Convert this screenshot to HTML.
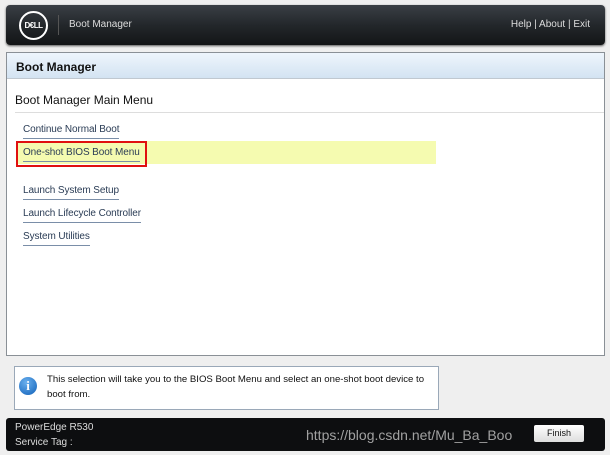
<!DOCTYPE html>
<html><head><style>
body{margin:0;width:610px;height:455px;background:#efefef;font-family:"Liberation Sans",sans-serif;position:relative;overflow:hidden}
.hdr{position:absolute;left:6px;top:5px;width:599px;height:40px;border-radius:4px;background:linear-gradient(#3a3f45,#23272b 50%,#131517);box-shadow:0 1px 2px #555}
.logo{position:absolute;left:13px;top:6px;width:25px;height:25px;border:2px solid #fff;border-radius:50%;color:#fff;font-size:8px;font-weight:bold;text-align:center;line-height:25px;letter-spacing:-0.5px}
.sep{position:absolute;left:52px;top:10px;width:1px;height:20px;background:#555}
.ht{position:absolute;left:63px;top:14px;color:#ddd;font-size:10px}
.hr{position:absolute;right:15px;top:14px;color:#ddd;font-size:10px}
.main{position:absolute;left:6px;top:52px;width:597px;height:302px;background:#fff;border:1px solid #8a9096}
.tb{height:25px;background:linear-gradient(#eef5fc,#d3e3f2);border-bottom:1px solid #c0c8d0;font-size:12px;font-weight:bold;color:#111;line-height:28px;padding-left:9px}
.mm{position:absolute;left:8px;top:40px;font-size:12px;color:#111}
.line{position:absolute;left:8px;right:0;top:59px;height:1px;background:#ddd}
.it{position:absolute;left:16px;font-size:10px;color:#2a3c55;padding-bottom:3px;border-bottom:1px solid #7a8ea8;letter-spacing:-0.1px}
.hl{position:absolute;left:10px;top:88px;width:419px;height:23px;background:#f5fbb0}
.red{position:absolute;box-sizing:border-box;width:131px;height:26px;left:9px;top:88px;border:2px solid #e01010}
.info{position:absolute;left:14px;top:366px;width:423px;height:42px;background:#fff;border:1px solid #9aa8b8}
.ic{position:absolute;left:4px;top:10px;width:18px;height:18px;border-radius:50%;background:radial-gradient(circle at 40% 30%,#6ab0ee,#1060b8);color:#fff;font:bold 13px "Liberation Serif",serif;text-align:center;line-height:18px}
.itx{position:absolute;left:32px;top:5px;width:390px;font-size:9.6px;line-height:15px;color:#111;white-space:nowrap}
.ftr{position:absolute;left:6px;top:418px;width:599px;height:33px;background:#0d0e10;border-radius:3px;color:#ddd;font-size:10px}
.btn{position:absolute;left:528px;top:7px;width:50px;height:17px;background:linear-gradient(#fff,#ddd);border-radius:2px;font-size:9px;color:#111;text-align:center;line-height:17px}
.wm{position:absolute;left:300px;top:9px;font-size:14px;color:#bbb;opacity:.85}
</style></head><body>
<div class="hdr"><div class="logo">D€LL</div><div class="sep"></div><div class="ht">Boot Manager</div><div class="hr">Help | About | Exit</div></div>
<div class="main">
<div class="tb">Boot Manager</div>
<div class="mm">Boot Manager Main Menu</div>
<div class="line"></div>
<div class="it" style="top:71px">Continue Normal Boot</div>
<div class="hl"></div>
<div class="red"></div>
<div class="it" style="top:94px">One-shot BIOS Boot Menu</div>
<div class="it" style="top:132px">Launch System Setup</div>
<div class="it" style="top:155px">Launch Lifecycle Controller</div>
<div class="it" style="top:178px">System Utilities</div>
</div>
<div class="info"><div class="ic">i</div><div class="itx">This selection will take you to the BIOS Boot Menu and select an one-shot boot device to<br>boot from.</div></div>
<div class="ftr"><div style="position:absolute;left:9px;top:4px">PowerEdge R530</div><div style="position:absolute;left:9px;top:19px">Service Tag :</div><div class="wm">https://blog.csdn.net/Mu_Ba_Boo</div><div class="btn">Finish</div></div>
</body></html>
